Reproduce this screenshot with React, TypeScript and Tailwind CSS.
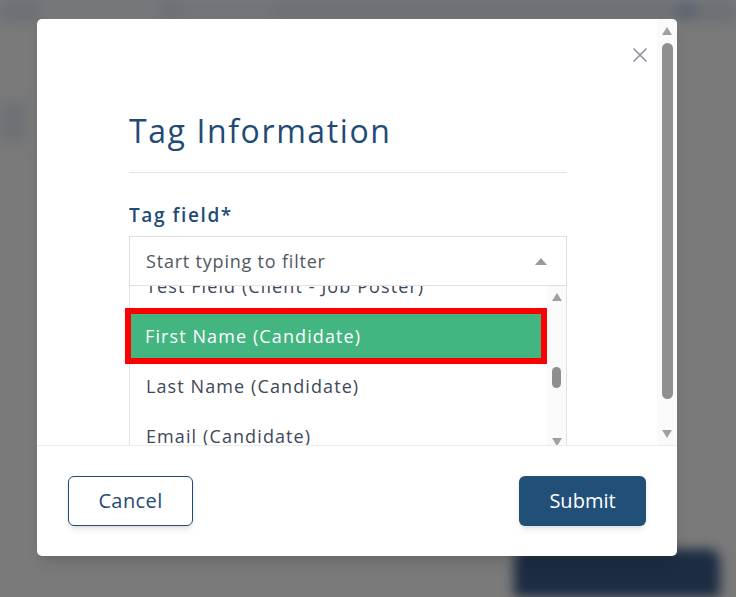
import { X } from "lucide-react";

function Triangle({ up = true, className = "" }: { up?: boolean; className?: string }) {
  return (
    <svg width="10" height="8" viewBox="0 0 10 8" className={className}>
      {up ? <polygon points="5,0 10,8 0,8" fill="currentColor" /> : <polygon points="0,0 10,0 5,8" fill="currentColor" />}
    </svg>
  );
}

const options = [
  "Test Field (Client - Job Poster)",
  "First Name (Candidate)",
  "Last Name (Candidate)",
  "Email (Candidate)",
];

export default function App() {
  return (
    <div className="relative h-[597px] w-[736px] overflow-hidden bg-[#7a7a7a] font-['Open_Sans',sans-serif]">
      {/* blurred page behind the overlay */}
      <div className="flex h-full flex-col blur-[6px]">
        <div className="flex h-[22px] items-center gap-6 bg-[#6d7075] px-10">
          <div className="h-[10px] w-[120px] bg-[#7b7d80]" />
          <div className="h-[10px] w-[90px] bg-[#74777b]" />
          <div className="ml-auto h-[16px] w-[20px] rounded-full bg-[#5b6470]" />
        </div>
        <div className="mt-[80px] h-[40px] w-[26px] bg-[#6e7176]" />
        <div className="mt-auto flex justify-end pr-[16px]">
          <div className="h-[48px] w-[206px] rounded-t-xl bg-[#1c2c42]" />
        </div>
      </div>

      {/* modal */}
      <div className="absolute left-[37px] top-[19px] flex h-[537px] w-[640px] flex-col overflow-hidden rounded-[5px] bg-white shadow-lg">
        <div className="flex h-[426px]">
          <div className="relative flex-1 overflow-hidden pl-[92px] pr-[90px]">
            <button className="absolute right-[5px] top-[24px] text-[#8c95a5]">
              <X size={24} strokeWidth={1.7} />
            </button>

            <h1 className="mt-[92px] border-b border-[#e3e3e3] pb-[21px] text-[32px] leading-[40px] tracking-[1.6px] text-[#1f4b76]">
              Tag Information
            </h1>

            <div className="mt-[30px] text-[19px] font-semibold leading-[24px] tracking-[1.6px] text-[#1f4b76]">
              Tag field*
            </div>

            <div className="mt-[9px] flex h-[50px] items-center justify-between border border-[#e0e0e0] pl-[16px] pr-[19px]">
              <span className="text-[18px] tracking-[0.8px] text-[#50575f]">Start typing to filter</span>
              <svg width="12" height="7" viewBox="0 0 12 7" className="text-[#9a9a9a]">
                <polygon points="6,0 12,7 0,7" fill="currentColor" />
              </svg>
            </div>

            <div className="flex h-[160px] border-x border-[#e3e3e3]">
              <ul className="-ml-[5px] flex-1 overflow-hidden pl-[5px]">
                {options.map((o, i) => (
                  <li
                    key={o}
                    className={
                      i === 0
                        ? "-mt-[25px] flex h-[50px] items-center pl-[16px] text-[18px] tracking-[1.1px] text-[#3d4859]"
                        : i === 1
                        ? "-ml-[2px] mr-[3px] flex h-[50px] items-center bg-[#43b581] pl-[17px] text-[18px] tracking-[1.1px] text-white outline-[6px] outline-[#ff0000] outline-solid -outline-offset-3"
                        : "flex h-[50px] items-center pl-[16px] text-[18px] tracking-[1.1px] text-[#3d4859]"
                    }
                  >
                    {o}
                  </li>
                ))}
              </ul>
              <div className="flex w-[19px] flex-col items-center bg-[#fafafa] pt-[7px]">
                <Triangle className="text-[#a0a0a0]" />
                <div className="mt-[66px] h-[21px] w-[9px] rounded-full bg-[#8e8e8e]" />
                <Triangle up={false} className="mt-[50px] text-[#a0a0a0]" />
              </div>
            </div>
          </div>

          {/* outer scrollbar */}
          <div className="flex w-[20px] flex-col items-center bg-[#fafafa] pt-[8px]">
            <Triangle className="text-[#a0a0a0]" />
            <div className="mt-[8px] h-[356px] w-[11px] rounded-full bg-[#8f8f8f]" />
            <Triangle up={false} className="mt-[31px] text-[#a0a0a0]" />
          </div>
        </div>

        <div className="flex flex-1 items-center justify-between border-t border-[#ececec] px-[31px]">
          <button className="h-[50px] w-[125px] rounded-[6px] border border-[#1f4b76] text-[20px] tracking-[0.4px] text-[#1f4b76] shadow-md">
            Cancel
          </button>
          <button className="h-[50px] w-[127px] rounded-[6px] bg-[#214f78] text-[20px] font-medium text-white shadow-md">
            Submit
          </button>
        </div>
      </div>
    </div>
  );
}
